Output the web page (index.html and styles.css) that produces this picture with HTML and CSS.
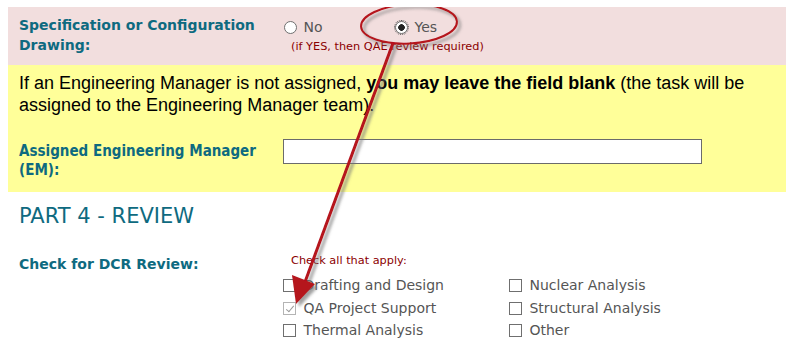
FILE: index.html
```html
<!DOCTYPE html>
<html lang="en">
<head>
  <meta charset="UTF-8" />
  <title>DCR Request - Review</title>
  <link rel="stylesheet" href="styles.css">
</head>
<body>

  <div class="band band-pink">
    <div class="row">
      <div class="label">Specification or Configuration Drawing:</div>
      <div class="field field-radios">
        <div class="radios">
          <label class="opt"><input type="radio" name="specDrawing" value="no"> No</label>
          <label class="opt"><input type="radio" name="specDrawing" value="yes" checked> Yes</label>
        </div>
        <div class="hint">(if YES, then QAE review required)</div>
      </div>
    </div>
  </div>

  <div class="band band-yellow">
    <p class="notice">If an Engineering Manager is not assigned, <b>you may leave the field blank</b> (the task will be assigned to the Engineering Manager team).</p>
    <div class="row row-em">
      <div class="label label-em">Assigned Engineering Manager (EM):</div>
      <div class="field">
        <input type="text" class="text-input" id="emName">
      </div>
    </div>
  </div>

  <h2 class="part-title">PART 4 - REVIEW</h2>

  <div class="row row-review">
    <div class="label">Check for DCR Review:</div>
    <div class="field">
      <div class="hint hint-top">Check all that apply:</div>
      <div class="checks">
        <label class="opt"><input type="checkbox"> Drafting and Design</label>
        <label class="opt"><input type="checkbox"> Nuclear Analysis</label>
        <label class="opt"><input type="checkbox" checked disabled> QA Project Support</label>
        <label class="opt"><input type="checkbox"> Structural Analysis</label>
        <label class="opt"><input type="checkbox"> Thermal Analysis</label>
        <label class="opt"><input type="checkbox"> Other</label>
      </div>
    </div>
  </div>

  <!-- callout drawn over the form -->
  <svg class="callout" width="792" height="346" viewBox="0 0 792 346">
    <defs>
      <filter id="shade" x="-20%" y="-20%" width="140%" height="140%">
        <feDropShadow dx="3" dy="3" stdDeviation="1.6" flood-color="#777" flood-opacity="0.7" />
      </filter>
    </defs>
    <g filter="url(#shade)" fill="none" stroke="#b5121b">
      <ellipse cx="409" cy="24" rx="48" ry="19.5" stroke-width="2" transform="rotate(-3 409 24)" />
      <line x1="393" y1="43" x2="305" y2="282" stroke-width="3" />
      <polygon points="296,304 292,275 315,284" fill="#b5121b" stroke="none" />
    </g>
  </svg>

</body>
</html>
```

FILE: styles.css
```css
* {
  box-sizing: border-box;
}

body {
  margin: 7px 6px 0 8px;
  font-family: "DejaVu Sans", Verdana, sans-serif;
  font-size: 14px;
  color: #555;
  background: #fff;
  position: relative;
}

.band {
  padding: 0 11px;
}

.band-pink {
  background-color: #f2dede;
  height: 58px;
  padding-top: 8px;
}

.band-yellow {
  background-color: #ffff99;
  height: 127px;
  padding-top: 7px;
}

.row {
  display: flex;
}

.label {
  width: 264px;
  flex-shrink: 0;
  font-weight: bold;
  color: #0e6a80;
  line-height: 20px;
  padding-right: 10px;
}

.field {
  flex: 1;
}

.field-radios {
  padding-top: 2px;
}

.radios {
  display: flex;
  line-height: 20px;
}

.radios .opt {
  width: 111px;
}

/* old-style radios and checkboxes */
.opt input {
  appearance: none;
  -webkit-appearance: none;
  width: 13px;
  height: 13px;
  margin: 0 2px 0 1px;
  vertical-align: -2px;
  background: #fff;
  border: 1px solid #6f6f6f;
  position: relative;
}

.opt input[type="radio"] {
  border-radius: 50%;
}

.opt input[type="radio"]:checked {
  background: radial-gradient(circle, #222 0, #222 3px, #fff 3.6px);
  outline: 1px dotted #555;
  outline-offset: 0;
  border-radius: 50%;
}

.opt input[type="checkbox"]:disabled {
  border-color: #b4b4b4;
}

.opt input[type="checkbox"]:checked::after {
  content: "";
  position: absolute;
  left: 3.5px;
  top: 1px;
  width: 3px;
  height: 7px;
  border: solid #999;
  border-width: 0 1.5px 1.5px 0;
  transform: rotate(40deg);
}

.hint {
  font-size: 11.3px;
  color: #8b0000;
  padding-left: 8px;
  margin-top: 3px;
}

.notice {
  margin: 0;
  font-family: "Liberation Sans", Arial, sans-serif;
  font-size: 18px;
  line-height: 22px;
  color: #000;
}

.row-em {
  margin-top: 23px;
}

.label-em {
  font-family: "DejaVu Sans Condensed", "DejaVu Sans", sans-serif;
  font-size: 15px;
  line-height: 19px;
  padding-top: 3px;
}

.text-input {
  width: 419px;
  height: 25px;
  border: 1px solid #6b6b6b;
  background: #fff;
  margin: 0;
}

.part-title {
  margin: 11px 0 0 11px;
  font-size: 21px;
  font-weight: normal;
  color: #0e6a80;
  line-height: 26px;
}

.row-review {
  margin-top: 25px;
  padding-left: 11px;
}

.hint-top {
  margin: 0 0 9px;
}

.checks {
  display: grid;
  grid-template-columns: 226px 200px;
  row-gap: 3.5px;
  line-height: 19px;
}

.checks .opt {
  white-space: nowrap;
}

.checks input {
  margin: 0 3px 0 0;
}

.callout {
  position: absolute;
  left: -8px;
  top: -7px;
  pointer-events: none;
}
```
